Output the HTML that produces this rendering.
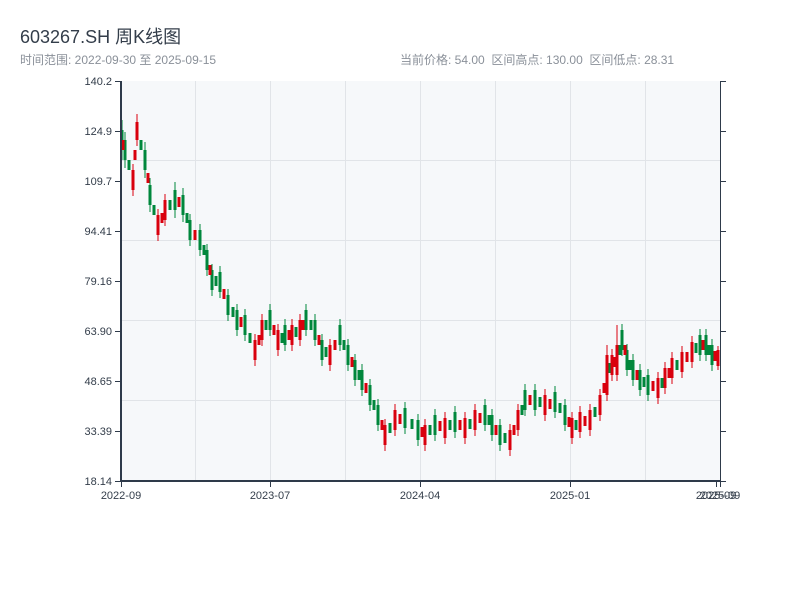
<!DOCTYPE html>
<html><head><meta charset="utf-8"><style>
body{margin:0;width:800px;height:600px;background:#fff;font-family:"Liberation Sans","Noto Sans CJK SC",sans-serif;overflow:hidden;position:relative}
.t{position:absolute;white-space:nowrap}
</style></head><body>
<div class="t" style="left:20px;top:23px;font-size:18px;color:#333d4a">603267.SH 周K线图</div>
<div class="t" style="left:20px;top:51px;font-size:12px;color:#8a9099">时间范围: 2022-09-30 至 2025-09-15</div>
<div class="t" style="left:400px;top:51px;font-size:12px;color:#8a9099">当前价格: 54.00&nbsp;&nbsp;区间高点: 130.00&nbsp;&nbsp;区间低点: 28.31</div>
<svg width="800" height="600" style="position:absolute;left:0;top:0" font-family="Liberation Sans, sans-serif" font-size="11" fill="#333d4a">
<rect x="121" y="81" width="599" height="400" fill="#f6f8fa"/>
<g stroke="#e1e4e8" stroke-width="1">
<path d="M121 160.5H720M121 240.5H720M121 320.5H720M121 400.5H720M195.5 81V481M270.5 81V481M345.5 81V481M420.5 81V481M495.5 81V481M570.5 81V481M645.5 81V481"/>
</g>
<!-- green bodies -->
<path stroke="#00873c" stroke-width="3" fill="none" d="M122 130V150M125 140V160M145 150V170M150 185V205M175 190V210M183 195V215M190 220V240M200 230V250M207 250V270M212 270V290M220 272V292M228 295V315M237 310V330M245 315V335M270 310V330M285 325V345M306 310V330M315 320V340M322 340V360M340 325V345M348 345V365M355 360V380M362 370V390M370 385V405M378 405V425M405 408V428M418 420V440M435 415V435M455 412V432M485 405V425M492 415V435M500 425V445M525 390V410M535 390V410M555 392V412M565 405V425M622 330V350M627 350V370M633 360V380M640 370V390M648 375V395M700 335V355M706 335V355M712 345V365
M129 160V170M141 140V150M154 205V215M170 200V210M187 213V223M204 245V255M216 276V286M233 307V317M250 333V343M266 320V330M282 333V343M296 327V337M311 320V330M326 347V357M344 340V350M359 370V380M374 400V410M390 423V433M412 419V429M430 425V435M450 420V430M470 419V429M489 415V425M505 433V443M522 405V415M540 397V407M560 403V413M576 420V430M595 407V417M610 363V373M620 345V355M630 360V370M644 377V387M662 378V388M677 360V370M696 343V353M709 345V355"/>
<path stroke="#00873c" stroke-width="1" fill="none" d="M122 120V160M125 132V168M145 142V178M150 178V212M175 182V218M183 188V222M190 214V246M200 224V256M207 244V276M212 264V296M220 266V298M228 289V321M237 304V336M245 309V341M270 304V336M285 319V351M306 304V336M315 314V346M322 334V366M340 319V351M348 339V371M355 354V386M362 364V396M370 379V411M378 399V431M405 402V434M418 414V446M435 409V441M455 406V438M485 399V431M492 409V441M500 419V451M525 384V416M535 384V416M555 386V418M565 399V431M622 324V356M627 344V376M633 354V386M640 364V396M648 369V401M700 329V361M706 329V361M712 339V371"/>
<!-- red bodies -->
<path stroke="#d9000d" stroke-width="3" fill="none" d="M133 170V190M137 122V140M158 215V235M165 200V220M255 340V360M262 320V340M278 330V350M292 325V345M300 320V340M330 345V365M385 425V445M395 410V430M425 425V445M445 418V438M465 418V438M475 410V430M510 430V450M518 410V430M545 395V415M572 418V438M580 412V432M590 410V430M600 395V415M607 355V395M612 355V375M617 345V375M658 378V398M665 368V388M672 358V378M682 352V372M692 342V362M718 350V366
M123 140V150M135 150V160M148 173V183M162 213V223M179 197V207M195 230V240M210 265V275M224 289V299M241 317V327M259 335V345M274 325V335M289 330V340M303 320V330M319 335V345M335 340V350M352 357V367M366 383V393M382 420V430M400 414V424M422 427V437M440 421V431M460 420V430M480 413V423M496 425V435M514 425V435M530 395V405M550 399V409M569 417V427M585 416V426M604 383V393M615 357V367M625 345V355M637 370V380M653 381V391M669 368V378M687 352V362M703 340V350M715 351V361"/>
<path stroke="#d9000d" stroke-width="1" fill="none" d="M133 164V196M137 114V146M158 209V241M165 194V226M255 334V366M262 314V346M278 324V356M292 319V351M300 314V346M330 339V371M385 419V451M395 404V436M425 419V451M445 412V444M465 412V444M475 404V436M510 424V456M518 404V436M545 389V421M572 412V444M580 406V438M590 404V436M600 389V421M607 345V401M612 349V381M617 325V381M658 372V404M665 362V394M672 352V384M682 346V378M692 336V368M718 346V370"/>
<g stroke="#2e3a4a" fill="none">
<path d="M121 81V482M120 481H721" stroke-width="2"/>
<path d="M720.5 81V481"/>
<path d="M115 81.5H121M115 131.5H121M115 181.5H121M115 231.5H121M115 281.5H121M115 331.5H121M115 381.5H121M115 431.5H121M115 481.5H121M720 81.5H726M720 131.5H726M720 181.5H726M720 231.5H726M720 281.5H726M720 331.5H726M720 381.5H726M720 431.5H726M720 481.5H726M121.5 481V487M270.5 481V487M420.5 481V487M570.5 481V487M716.5 481V487M720.5 481V487"/>
</g>
<g text-anchor="end">
<text x="112" y="85">140.2</text><text x="112" y="135">124.9</text><text x="112" y="185">109.7</text><text x="112" y="235">94.41</text><text x="112" y="285">79.16</text><text x="112" y="335">63.90</text><text x="112" y="385">48.65</text><text x="112" y="435">33.39</text><text x="112" y="485">18.14</text>
</g>
<g text-anchor="middle">
<text x="121" y="499">2022-09</text><text x="270" y="499">2023-07</text><text x="420" y="499">2024-04</text><text x="570" y="499">2025-01</text><text x="716" y="499">2025-09</text><text x="720" y="499">2025-09</text>
</g>
</svg>
</body></html>
